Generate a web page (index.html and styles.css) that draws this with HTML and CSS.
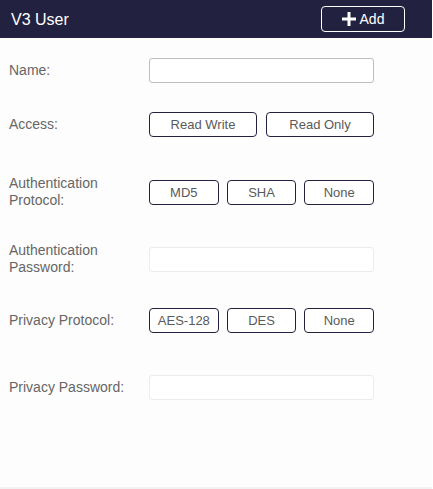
FILE: index.html
```html
<!DOCTYPE html>
<html lang="en">
<head>
<meta charset="utf-8">
<title>V3 User</title>
<link rel="stylesheet" href="styles.css">
</head>
<body>
<div class="panel">
  <header class="header">
    <h1 class="title">V3 User</h1>
    <button class="add-btn" type="button">
      <svg class="add-icon" width="14" height="14" viewBox="0 0 14 14" aria-hidden="true">
        <rect x="5.5" y="0" width="3" height="14" fill="#fff"/>
        <rect x="0" y="5.5" width="14" height="3" fill="#fff"/>
      </svg>
      <span>Add</span>
    </button>
  </header>
  <main class="form">
    <div class="row">
      <label class="label">Name:</label>
      <input class="field" type="text">
    </div>
    <div class="row row--access">
      <span class="label">Access:</span>
      <div class="choices choices--two">
        <button class="choice" type="button">Read Write</button>
        <button class="choice" type="button">Read Only</button>
      </div>
    </div>
    <div class="row row--auth">
      <span class="label">Authentication<br>Protocol:</span>
      <div class="choices">
        <button class="choice" type="button">MD5</button>
        <button class="choice" type="button">SHA</button>
        <button class="choice" type="button">None</button>
      </div>
    </div>
    <div class="row">
      <label class="label">Authentication<br>Password:</label>
      <input class="field field--disabled" type="password" disabled>
    </div>
    <div class="row row--privacy">
      <span class="label">Privacy Protocol:</span>
      <div class="choices">
        <button class="choice" type="button">AES-128</button>
        <button class="choice" type="button">DES</button>
        <button class="choice" type="button">None</button>
      </div>
    </div>
    <div class="row">
      <label class="label">Privacy Password:</label>
      <input class="field field--disabled" type="password" disabled>
    </div>
  </main>
</div>
</body>
</html>
```
FILE: styles.css
```css
html, body {
  margin: 0;
  padding: 0;
  background: #ffffff;
}
body {
  font-family: "Liberation Sans", Arial, Helvetica, sans-serif;
  width: 433px;
  height: 489px;
  overflow: hidden;
}
.panel {
  width: 432px;
  height: 487px;
  background: #fdfdfd;
  border-bottom: 2px solid #f2f2f2;
}
.header {
  height: 38px;
  background: #222240;
  display: flex;
  align-items: center;
  justify-content: space-between;
  padding: 0 27px 0 11px;
  box-sizing: border-box;
}
.title {
  margin: 0;
  font-size: 16px;
  font-weight: normal;
  color: #ffffff;
  padding-top: 1px;
}
.add-btn {
  width: 84px;
  height: 26px;
  border: 1px solid #ffffff;
  border-radius: 4px;
  background: transparent;
  color: #ffffff;
  font-family: inherit;
  font-size: 14px;
  display: flex;
  align-items: center;
  justify-content: center;
  gap: 4px;
  padding: 0;
  box-sizing: border-box;
}
.add-icon {
  display: block;
}
.form {
  padding: 15px 0 0 9px;
}
.row {
  display: flex;
  align-items: center;
  height: 34px;
}
.row + .row {
  margin-top: 33px;
}
.row.row--access {
  margin-top: 20px;
}
.row.row--auth {
  margin-top: 34px;
}
.row.row--privacy {
  margin-top: 27px;
}
.label {
  width: 140px;
  flex: none;
  font-size: 14px;
  line-height: 17px;
  color: #666666;
}
.field {
  width: 225px;
  height: 25px;
  box-sizing: border-box;
  margin: 0;
  border: 1px solid #bdbdbd;
  border-radius: 3px;
  background: #ffffff;
  padding: 0 6px;
  font-family: inherit;
  font-size: 13px;
}
.field--disabled {
  border-color: #ececec;
  background: #ffffff;
}
.choices {
  display: flex;
  gap: 8px;
  width: 225px;
}
.choices--two {
  gap: 9px;
}
.choice {
  flex: 1 1 0;
  height: 25px;
  margin: 0;
  padding: 0;
  border: 1px solid #222240;
  border-radius: 4px;
  background: #ffffff;
  color: #5a5a5a;
  font-family: inherit;
  font-size: 13px;
  box-sizing: border-box;
}
```
